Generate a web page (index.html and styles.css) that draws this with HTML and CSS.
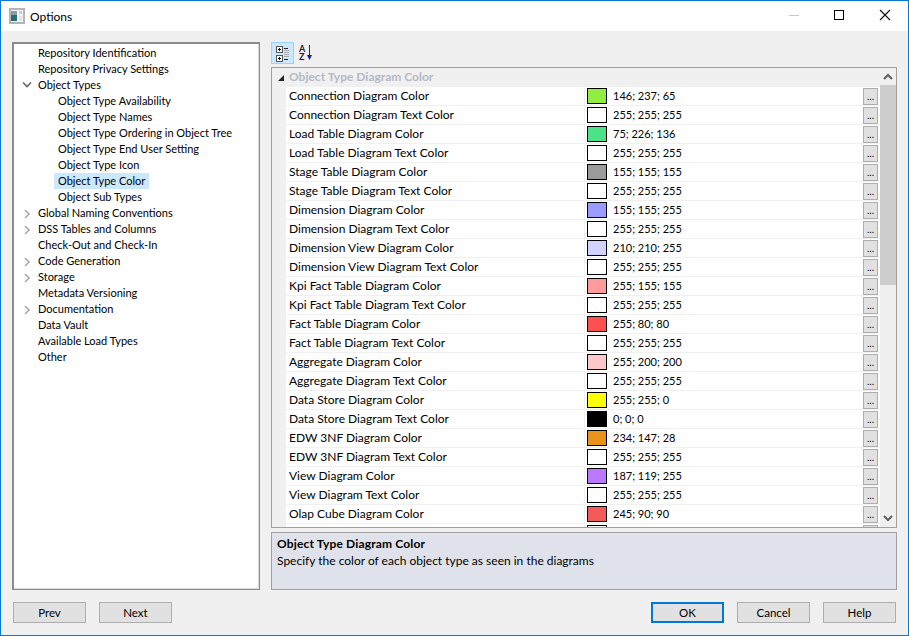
FILE: index.html
```html
<!DOCTYPE html>
<html>
<head>
<meta charset="utf-8">
<title>Options</title>
<link rel="stylesheet" href="styles.css">
</head>
<body>
<div class="window">
  <header class="titlebar">
    <svg class="appicon" width="17" height="16" viewBox="0 0 17 16"><rect x="1" y="1" width="14" height="14" fill="#f4f4f4" stroke="#b4b4b4" stroke-width="2"/><rect x="2" y="3" width="6" height="10" fill="#2c6c72"/><rect x="2" y="3" width="6" height="4" fill="#7fa0ac"/><rect x="10" y="3" width="3" height="3" fill="#c9d2d8"/><rect x="10" y="8" width="3" height="5" fill="#dfe3e6"/></svg>
    <span class="title">Options</span>
    <div class="winbtns">
      <svg width="46" height="30" viewBox="0 0 46 30"><path d="M19 14.500h10" stroke="#c8c8c8"/></svg>
      <svg width="46" height="30" viewBox="0 0 46 30"><rect x="18.500" y="9.500" width="9" height="9" fill="none" stroke="#000"/></svg>
      <svg width="46" height="30" viewBox="0 0 46 30"><path d="M18 9l10 10M28 9l-10 10" stroke="#111" stroke-width="1.1"/></svg>
    </div>
  </header>
  <main class="body">
    <div class="panes">
      <nav class="tree">
        <div class="node l1">Repository Identification</div>
        <div class="node l1">Repository Privacy Settings</div>
        <div class="node l1"><svg class="tw" width="10" height="8" viewBox="0 0 10 8"><path d="M1 1.500l4 4 4-4" fill="none" stroke="#666" stroke-width="1.6"/></svg>Object Types</div>
        <div class="node l2">Object Type Availability</div>
        <div class="node l2">Object Type Names</div>
        <div class="node l2">Object Type Ordering in Object Tree</div>
        <div class="node l2">Object Type End User Setting</div>
        <div class="node l2">Object Type Icon</div>
        <div class="node l2"><span class="sel">Object Type Color</span></div>
        <div class="node l2">Object Sub Types</div>
        <div class="node l1"><svg class="tw" width="10" height="10" viewBox="0 0 10 10"><path d="M3 1l4 4-4 4" fill="none" stroke="#aaa" stroke-width="1.6"/></svg>Global Naming Conventions</div>
        <div class="node l1"><svg class="tw" width="10" height="10" viewBox="0 0 10 10"><path d="M3 1l4 4-4 4" fill="none" stroke="#aaa" stroke-width="1.6"/></svg>DSS Tables and Columns</div>
        <div class="node l1">Check-Out and Check-In</div>
        <div class="node l1"><svg class="tw" width="10" height="10" viewBox="0 0 10 10"><path d="M3 1l4 4-4 4" fill="none" stroke="#aaa" stroke-width="1.6"/></svg>Code Generation</div>
        <div class="node l1"><svg class="tw" width="10" height="10" viewBox="0 0 10 10"><path d="M3 1l4 4-4 4" fill="none" stroke="#aaa" stroke-width="1.6"/></svg>Storage</div>
        <div class="node l1">Metadata Versioning</div>
        <div class="node l1"><svg class="tw" width="10" height="10" viewBox="0 0 10 10"><path d="M3 1l4 4-4 4" fill="none" stroke="#aaa" stroke-width="1.6"/></svg>Documentation</div>
        <div class="node l1">Data Vault</div>
        <div class="node l1">Available Load Types</div>
        <div class="node l1">Other</div>
      </nav>
      <section class="right">
        <div class="toolbar">
          <div class="tool active">
            <svg width="17" height="16" viewBox="0 0 17 16"><path d="M10 5.500h5M10 7.500h5M10 9.500h5M10 11.500h5" stroke="#a3adb5"/><rect x="2.500" y="1.500" width="6" height="6" fill="#fff" stroke="#555"/><path d="M4 4.500h3M5.500 3v3" stroke="#111"/><rect x="2.500" y="10.500" width="6" height="6" fill="#fff" stroke="#555"/><path d="M4 13.500h3M5.500 12v3" stroke="#111"/><path d="M10 3.500h4M10 14.500h4" stroke="#222"/></svg>
          </div>
          <div class="tool">
            <svg width="17" height="18" viewBox="0 0 17 18"><text x="1" y="8" class="az">A</text><text x="1" y="16" class="az">Z</text><path d="M11.500 1v11" stroke="#1c2f8f"/><path d="M9 11h5l-2.500 5z" fill="#14208c"/></svg>
          </div>
        </div>
        <div class="grid">
          <div class="gridmain">
            <div class="cat"><svg class="cattw" width="8" height="8" viewBox="0 0 8 8"><path d="M7 1v6H1z" fill="#222"/></svg><span>Object Type Diagram Color</span></div>
            <div class="row"><span class="name">Connection Diagram Color</span><span class="val"><i class="sw c1"></i>146; 237; 65</span><span class="more"><b>...</b></span></div>
            <div class="row"><span class="name">Connection Diagram Text Color</span><span class="val"><i class="sw"></i>255; 255; 255</span><span class="more"><b>...</b></span></div>
            <div class="row"><span class="name">Load Table Diagram Color</span><span class="val"><i class="sw c2"></i>75; 226; 136</span><span class="more"><b>...</b></span></div>
            <div class="row"><span class="name">Load Table Diagram Text Color</span><span class="val"><i class="sw"></i>255; 255; 255</span><span class="more"><b>...</b></span></div>
            <div class="row"><span class="name">Stage Table Diagram Color</span><span class="val"><i class="sw c3"></i>155; 155; 155</span><span class="more"><b>...</b></span></div>
            <div class="row"><span class="name">Stage Table Diagram Text Color</span><span class="val"><i class="sw"></i>255; 255; 255</span><span class="more"><b>...</b></span></div>
            <div class="row"><span class="name">Dimension Diagram Color</span><span class="val"><i class="sw c4"></i>155; 155; 255</span><span class="more"><b>...</b></span></div>
            <div class="row"><span class="name">Dimension Diagram Text Color</span><span class="val"><i class="sw"></i>255; 255; 255</span><span class="more"><b>...</b></span></div>
            <div class="row"><span class="name">Dimension View Diagram Color</span><span class="val"><i class="sw c5"></i>210; 210; 255</span><span class="more"><b>...</b></span></div>
            <div class="row"><span class="name">Dimension View Diagram Text Color</span><span class="val"><i class="sw"></i>255; 255; 255</span><span class="more"><b>...</b></span></div>
            <div class="row"><span class="name">Kpi Fact Table Diagram Color</span><span class="val"><i class="sw c6"></i>255; 155; 155</span><span class="more"><b>...</b></span></div>
            <div class="row"><span class="name">Kpi Fact Table Diagram Text Color</span><span class="val"><i class="sw"></i>255; 255; 255</span><span class="more"><b>...</b></span></div>
            <div class="row"><span class="name">Fact Table Diagram Color</span><span class="val"><i class="sw c7"></i>255; 80; 80</span><span class="more"><b>...</b></span></div>
            <div class="row"><span class="name">Fact Table Diagram Text Color</span><span class="val"><i class="sw"></i>255; 255; 255</span><span class="more"><b>...</b></span></div>
            <div class="row"><span class="name">Aggregate Diagram Color</span><span class="val"><i class="sw c8"></i>255; 200; 200</span><span class="more"><b>...</b></span></div>
            <div class="row"><span class="name">Aggregate Diagram Text Color</span><span class="val"><i class="sw"></i>255; 255; 255</span><span class="more"><b>...</b></span></div>
            <div class="row"><span class="name">Data Store Diagram Color</span><span class="val"><i class="sw c9"></i>255; 255; 0</span><span class="more"><b>...</b></span></div>
            <div class="row"><span class="name">Data Store Diagram Text Color</span><span class="val"><i class="sw c10"></i>0; 0; 0</span><span class="more"><b>...</b></span></div>
            <div class="row"><span class="name">EDW 3NF Diagram Color</span><span class="val"><i class="sw c11"></i>234; 147; 28</span><span class="more"><b>...</b></span></div>
            <div class="row"><span class="name">EDW 3NF Diagram Text Color</span><span class="val"><i class="sw"></i>255; 255; 255</span><span class="more"><b>...</b></span></div>
            <div class="row"><span class="name">View Diagram Color</span><span class="val"><i class="sw c12"></i>187; 119; 255</span><span class="more"><b>...</b></span></div>
            <div class="row"><span class="name">View Diagram Text Color</span><span class="val"><i class="sw"></i>255; 255; 255</span><span class="more"><b>...</b></span></div>
            <div class="row"><span class="name">Olap Cube Diagram Color</span><span class="val"><i class="sw c13"></i>245; 90; 90</span><span class="more"><b>...</b></span></div>
            <div class="row"><span class="name"></span><span class="val"><i class="sw"></i></span><span class="more"></span></div>
          </div>
          <div class="scrollbar">
            <svg class="arrow" width="16" height="17" viewBox="0 0 16 17"><path d="M4 11l4-4 4 4" fill="none" stroke="#606060" stroke-width="2"/></svg>
            <div class="track"><div class="thumb"></div></div>
            <svg class="arrow" width="16" height="17" viewBox="0 0 16 17"><path d="M4 6l4 4 4-4" fill="none" stroke="#606060" stroke-width="2"/></svg>
          </div>
        </div>
        <div class="desc">
          <div class="desc-title">Object Type Diagram Color</div>
          <div class="desc-text">Specify the color of each object type as seen in the diagrams</div>
        </div>
      </section>
    </div>
    <footer class="footer">
      <div class="group">
        <button class="btn">Prev</button>
        <button class="btn">Next</button>
      </div>
      <div class="group">
        <button class="btn default">OK</button>
        <button class="btn">Cancel</button>
        <button class="btn">Help</button>
      </div>
    </footer>
  </main>
</div>
</body>
</html>
```
FILE: styles.css
```css
* { box-sizing: border-box; }
html, body { margin: 0; padding: 0; }
body {
  width: 909px;
  height: 636px;
  overflow: hidden;
  font-family: Lato, "Open Sans", sans-serif;
  font-size: 12px;
  color: #000;
}
.window {
  width: 909px;
  height: 636px;
  display: flex;
  flex-direction: column;
  border: 1px solid #0a78d2;
  background: #f0f0f0;
}
.titlebar {
  height: 30px;
  flex: none;
  background: #fff;
  display: flex;
  align-items: center;
  padding-left: 8px;
}
.appicon { margin-right: 4px; }
.title { font-size: 12px; }
.winbtns { margin-left: auto; display: flex; }
.winbtns svg { display: block; }
.body { flex: 1; display: flex; flex-direction: column; padding: 11px; min-height: 0; }
.panes { display: flex; gap: 11px; height: 548px; flex: none; }
.tree {
  width: 248px;
  flex: none;
  background: #fff;
  border: 1px solid #8c8c8c;
  border-left-width: 2px;
  border-top-width: 2px;
  padding-top: 1px;
  box-shadow: inset -1px -1px 0 #d8d8d8;
  font-size: 11px;
}
.node { height: 16px; line-height: 16px; white-space: nowrap; position: relative; }
.l1 { padding-left: 24px; }
.l2 { padding-left: 44px; }
.tw { position: absolute; left: 8px; top: 4px; }
.sel { display: inline-block; background: #cce8ff; margin-left: -4px; padding: 0 4px; height: 16px; }
.right { flex: 1; display: flex; flex-direction: column; min-width: 0; }
.toolbar { height: 25px; flex: none; display: flex; align-items: flex-start; gap: 1px; }
.tool { width: 23px; height: 22px; display: flex; align-items: center; justify-content: center; border: 1px solid transparent; }
.tool.active { background: #cce8ff; border-color: #99d1ff; }
.tool svg { overflow: visible; }
.az { font-size: 9px; font-weight: 700; fill: #222; }
.grid { height: 461px; flex: none; display: flex; background: #f0f0f0; border: 1px solid #a0a0a0; overflow: hidden; }
.gridmain { flex: 1; min-width: 0; overflow: hidden; }
.cat { height: 19px; display: flex; align-items: center; font-weight: 700; color: #b4bac4; padding-bottom: 2px; }
.cat svg { margin-top: 2px; }
.cattw { margin-left: 5px; margin-right: 4px; flex: none; }
.row { height: 19px; display: flex; margin-left: 14px; border-bottom: 1px solid #f0f0f0; background: #fff; }
.name { width: 299px; flex: none; padding-left: 3px; line-height: 18px; border-right: 1px solid #f0f0f0; white-space: nowrap; }
.val { flex: 1; display: flex; align-items: flex-start; padding-left: 2px; line-height: 17px; font-size: 11px; }
.sw { width: 20px; height: 16px; border: 1px solid #000; background: #fff; margin-right: 6px; margin-top: 1px; flex: none; }
.more { width: 15px; height: 17px; margin-right: 2px; margin-top: 1px; background: #e1e1e1; border: 1px solid #adadad; flex: none; display: flex; justify-content: center; line-height: 14px; }
.more b { font-weight: 400; font-size: 10px; }
.c1 { background: rgb(146,237,65); }
.c2 { background: rgb(75,226,136); }
.c3 { background: rgb(155,155,155); }
.c4 { background: rgb(155,155,255); }
.c5 { background: rgb(210,210,255); }
.c6 { background: rgb(255,155,155); }
.c7 { background: rgb(255,80,80); }
.c8 { background: rgb(255,200,200); }
.c9 { background: rgb(255,255,0); }
.c10 { background: rgb(0,0,0); }
.c11 { background: rgb(234,147,28); }
.c12 { background: rgb(187,119,255); }
.c13 { background: rgb(245,90,90); }
.scrollbar { width: 16px; flex: none; display: flex; flex-direction: column; background: #f0f0f0; }
.arrow { display: block; flex: none; }
.track { flex: 1; }
.thumb { height: 200px; background: #cdcdcd; }
.desc { flex: 1; margin-top: 4px; background: #dfe2ea; border: 1px solid #a0a0a0; padding: 2px 5px; }
.desc-title { font-weight: 700; line-height: 17px; letter-spacing: .15px; }
.desc-text { line-height: 18px; }
.footer { display: flex; justify-content: space-between; margin-top: 12px; padding: 0 1px; }
.group { display: flex; gap: 13px; }
.btn {
  width: 73px;
  height: 21px;
  padding: 0;
  font: inherit;
  font-size: 11.5px;
  color: #000;
  background: #e1e1e1;
  border: 1px solid #adadad;
  border-radius: 0;
}
.btn.default { border: 2px solid #0078d7; }
```
